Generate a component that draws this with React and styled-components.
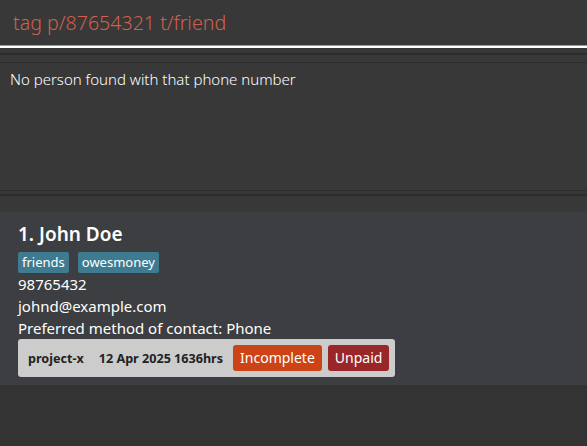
import React from 'react';
import styled, { createGlobalStyle } from 'styled-components';

const Global = createGlobalStyle`
    html, body {
        margin: 0;
        padding: 0;
        background: #383838;
        font-family: "Noto Sans", "Open Sans", sans-serif;
    }
`;

const Window = styled.div`
    width: 587px;
    height: 446px;
    display: flex;
    flex-direction: column;
    background: #383838;
    overflow: hidden;
`;

const CommandBox = styled.div`
    height: 46px;
    box-sizing: border-box;
    display: flex;
    align-items: center;
    padding-left: 13px;
    border-bottom: 1px solid #9a9a9a;
    box-shadow: 0 2px 0 #ffffff;
    color: #d0604c;
    font-size: 19.6px;
    font-weight: 300;
`;

const Divider = styled.div`
    margin-top: 7px;
    height: 7px;
    border-top: 2px solid #2c2c2c;
    border-bottom: 1px solid #2c2c2c;
`;

const ResultDisplay = styled.div`
    height: 128px;
    padding: 6px 10px;
    box-sizing: border-box;
    color: #ffffff;
    font-size: 15px;
    font-weight: 300;
    border-bottom: 1px solid #2c2c2c;
`;

const Splitter = styled.div`
    margin-top: 3px;
    height: 16px;
    border-top: 2px solid #2c2c2c;
`;

const ListArea = styled.div`
    flex: 1;
    background: #333333;
`;

const Card = styled.div`
    background: #3c3e41;
    padding: 10px 18px 8px;
    display: flex;
    flex-direction: column;
    color: #ffffff;
`;

const Name = styled.div`
    font-size: 19px;
    font-weight: 600;
    line-height: 25px;
`;

const Tags = styled.div`
    display: flex;
    gap: 9px;
    margin: 5px 0 0;
`;

const Tag = styled.span`
    background: #3e7b91;
    color: #ffffff;
    font-size: 13px;
    line-height: 21px;
    padding: 0 4px;
    border-radius: 2px;
`;

const Field = styled.div`
    font-size: 15px;
    line-height: 22px;
`;

const Project = styled.div`
    align-self: flex-start;
    display: flex;
    align-items: center;
    background: #cccccc;
    border-radius: 3px;
    padding: 4px 6px 4px 10px;
    height: 38px;
    box-sizing: border-box;
`;

const ProjectText = styled.span`
    color: #222222;
    font-size: 12.6px;
    font-weight: bold;
    margin-right: ${p => p.$gap}px;
`;

const Status = styled.span`
    background: ${p => p.$bg};
    color: #ffffff;
    font-size: 14px;
    line-height: 26px;
    padding: 0 7px;
    border-radius: 3px;
    margin-left: ${p => p.$gap}px;
`;

export default function App() {
    return (
        <Window>
            <Global />
            <CommandBox>tag p/87654321 t/friend</CommandBox>
            <Divider />
            <ResultDisplay>No person found with that phone number</ResultDisplay>
            <Splitter />
            <ListArea>
                <Card>
                    <Name>1. John Doe</Name>
                    <Tags>
                        <Tag>friends</Tag>
                        <Tag>owesmoney</Tag>
                    </Tags>
                    <Field>98765432</Field>
                    <Field>johnd@example.com</Field>
                    <Field>Preferred method of contact: Phone</Field>
                    <Project>
                        <ProjectText $gap={15}>project-x</ProjectText>
                        <ProjectText $gap={0}>12 Apr 2025 1636hrs</ProjectText>
                        <Status $bg="#cc4416" $gap={10}>Incomplete</Status>
                        <Status $bg="#992628" $gap={6}>Unpaid</Status>
                    </Project>
                </Card>
            </ListArea>
        </Window>
    );
}
